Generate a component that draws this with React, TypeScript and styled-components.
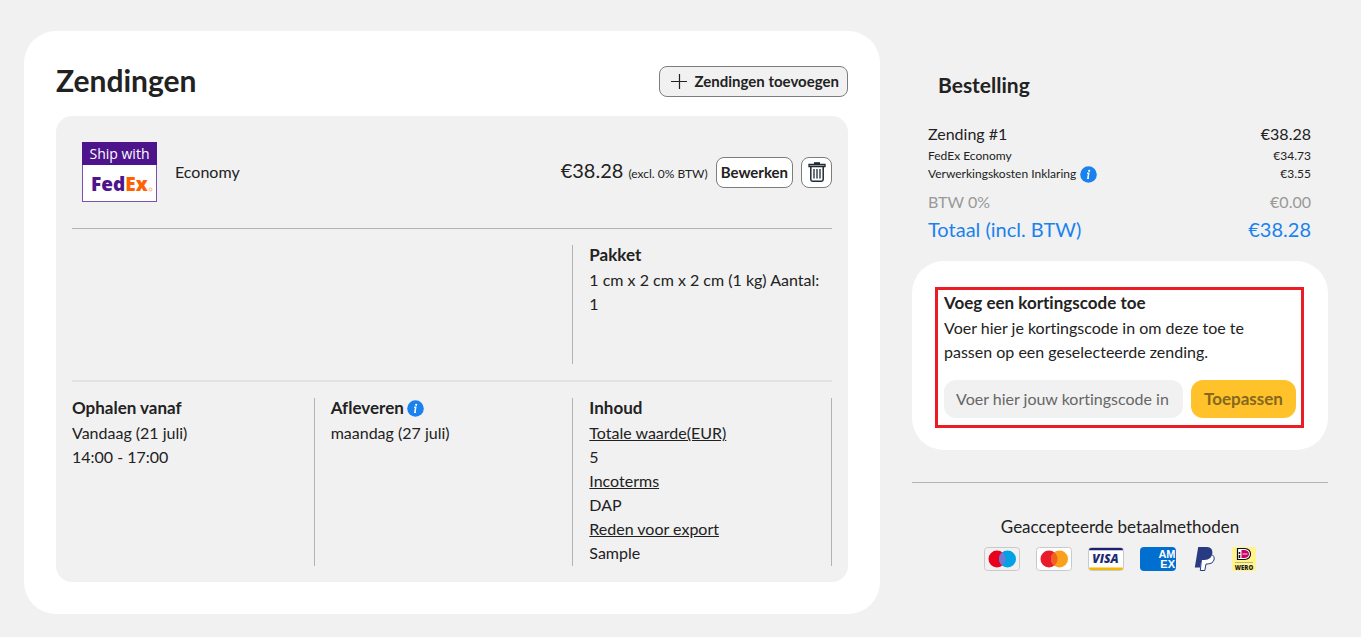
import React from "react";
import styled, { createGlobalStyle, css } from "styled-components";

const Global = createGlobalStyle`
  * { box-sizing: border-box; }
  body {
    margin: 0;
    background: #f1f1f1;
    color: #222;
    font-family: Lato, "Liberation Sans", sans-serif;
    font-size: 16px;
    line-height: 24px;
    font-variant-ligatures: none;
  }
  h1, h2, h3, p { margin: 0; }
  button, input { font: inherit; color: inherit; }
`;

const Page = styled.div`
  display: grid;
  grid-template-columns: minmax(0, 1fr) 416px;
  gap: 32px;
  align-items: start;
  padding: 31px 33px 23px 24px;
`;

const Card = styled.main`
  background: #fff;
  border-radius: 32px;
  padding: 32px;
`;

const CardHeader = styled.header`
  display: flex;
  align-items: center;
  justify-content: space-between;
  height: 36px;
  margin-bottom: 17px;
`;

const Title = styled.h1`
  font-size: 30px;
  line-height: 34px;
  padding-bottom: 2px;
  font-weight: 700;
`;

const OutlineButton = styled.button<{ $plain?: boolean; $square?: boolean }>`
  display: inline-flex;
  align-items: center;
  justify-content: center;
  gap: 8px;
  height: 31px;
  padding: ${(p) => (p.$square ? "0" : p.$plain ? "0 8px 0 11px" : "0 4px")};
  ${(p) => p.$square && css`width: 31px;`}
  border: 1px solid #7d7d7d;
  border-radius: 8px;
  background: ${(p) => (p.$plain ? "#f1f1f1" : "#fff")};
  font-size: 15px;
  font-weight: 700;
  white-space: nowrap;
`;

const Panel = styled.section`
  background: #f1f1f1;
  border-radius: 16px;
  padding: 0 16px;
`;

const ServiceRow = styled.div`
  display: flex;
  align-items: center;
  height: 113px;
  padding-left: 10px;
  border-bottom: 1px solid #b3b3b3;
`;

const ServiceName = styled.span`
  flex: 1;
  margin-left: 18px;
`;

const Price = styled.span`
  margin-right: 8px;
  font-size: 20px;
  small { font-size: 12px; }
`;

const Actions = styled.div`
  display: flex;
  gap: 8px;
`;

const DetailGrid = styled.div<{ $ruled?: boolean }>`
  display: grid;
  grid-template-columns: repeat(3, minmax(0, 1fr));
  gap: 16px;
  padding: 16px 0;
  min-height: ${(p) => (p.$ruled ? "153px" : "200px")};
  ${(p) => p.$ruled && css`border-bottom: 2px solid #e3e3e3;`}
`;

const Cell = styled.div<{ $line?: boolean; $span?: number }>`
  border-right: ${(p) => (p.$line ? "1px solid #b3b3b3" : "0")};
  ${(p) => p.$span && css`grid-column: span ${p.$span};`}
`;

const CellTitle = styled.h3`
  display: flex;
  align-items: center;
  gap: 3px;
  margin-bottom: 3px;
  font-size: 17px;
  line-height: 20px;
  font-weight: 700;
`;

const Term = styled.p`
  text-decoration: underline;
`;

const Aside = styled.aside`
  padding-top: 42px;
`;

const OrderTitle = styled.h2`
  padding-left: 26px;
  font-size: 21px;
  line-height: 24px;
  font-weight: 700;
  margin-bottom: 25px;
`;

const OrderLines = styled.div`
  padding: 0 17px 0 16px;
`;

const OrderLine = styled.div<{ $kind?: "small" | "muted" | "total" }>`
  display: flex;
  justify-content: space-between;
  font-size: 16px;
  line-height: 24px;
  &:first-child { margin-bottom: 1px; }
  ${(p) => p.$kind === "small" && css`font-size: 12px; line-height: 18px;`}
  ${(p) => p.$kind === "muted" && css`color: #999; margin-top: 7px;`}
  ${(p) => p.$kind === "total" && css`color: #1a82ee; font-size: 20px; line-height: 30px;`}
`;

const LineLabel = styled.span`
  display: flex;
  align-items: center;
  gap: 4px;
`;

const Discount = styled.section`
  margin-top: 17px;
  padding: 26px 24px 22px 23px;
  border-radius: 32px;
  background: #fff;
`;

const Highlight = styled.form`
  padding: 3px 5px 7px 6px;
  border: 3px solid #ec1c24;
`;

const DiscountTitle = styled.h3`
  margin-bottom: 3px;
  font-size: 17px;
  line-height: 20px;
  font-weight: 700;
`;

const CodeRow = styled.div`
  display: flex;
  gap: 8px;
  margin-top: 16px;
`;

const CodeInput = styled.input`
  flex: 1;
  min-width: 0;
  height: 38px;
  padding: 0 12px 2px;
  border: 0;
  border-radius: 12px;
  background: #f1f1f1;
  &::placeholder { color: #666; opacity: 1; }
`;

const ApplyButton = styled.button`
  width: 105px;
  height: 38px;
  padding: 0;
  border: 0;
  border-radius: 12px;
  background: #ffc22a;
  color: #84681f;
  font-size: 17px;
  font-weight: 700;
`;

const Payments = styled.section`
  margin-top: 32px;
  padding-top: 32px;
  border-top: 1px solid #b3b3b3;
  text-align: center;
  font-size: 17px;
`;

const PaymentIcons = styled.div`
  display: flex;
  justify-content: center;
  gap: 16px;
  margin-top: 8px;
  svg { display: block; }
`;

const Info = () => (
  <svg width="17" height="17" viewBox="0 0 17 17" role="img" aria-label="Info">
    <circle cx="8.5" cy="8.5" r="8.3" fill="#1a82ee" />
    <circle cx="9.2" cy="4.8" r="1.1" fill="#fff" />
    <path d="M7.2 7.2h1.5l-.8 5h1" fill="none" stroke="#fff" strokeWidth="1.5" />
  </svg>
);

const Plus = () => (
  <svg width="16" height="16" viewBox="0 0 16 16" aria-hidden="true">
    <path d="M0 8.5h16M8.5 1v15" stroke="#222" strokeWidth="1.2" />
  </svg>
);

const Trash = () => (
  <svg width="18" height="20" viewBox="0 0 18 20" fill="none" stroke="#1f2a33" aria-hidden="true">
    <path d="M6 1.2h6" strokeWidth="2" />
    <path d="M1 2.5h16v2H1z" strokeWidth="1.3" />
    <path d="M2.8 4.5v13q0 1.7 1.7 1.7h9q1.7 0 1.7-1.7v-13" strokeWidth="1.5" />
    <path d="M6 7v9.5M9 7v9.5M12 7v9.5" strokeWidth="1.3" />
  </svg>
);

const FedEx = () => (
  <svg width="75" height="60" viewBox="0 0 75 60" role="img" aria-label="Ship with FedEx">
    <rect x=".5" y=".5" width="74" height="59" fill="#fff" stroke="#7d4fae" />
    <rect width="75" height="23" fill="#4d148c" />
    <text x="37.5" y="17" textAnchor="middle" fontFamily="Open Sans" fontWeight="400" fontSize="14" fill="#fff">Ship with</text>
    <text x="9" y="49" fontFamily="Open Sans" fontWeight="800" fontSize="19" fill="#4d148c">Fed<tspan fill="#ff6200">Ex</tspan></text>
    <circle cx="68.5" cy="47.5" r="1.5" fill="none" stroke="#ff9a55" strokeWidth=".8" />
  </svg>
);

const DuoCard = ({ name, left, right, overlap, fill }: { name: string; left: string; right: string; overlap: string; fill: string }) => (
  <svg width="36" height="24" viewBox="0 0 36 24" role="img" aria-label={name}>
    <rect x=".5" y=".5" width="35" height="23" rx="3" fill={fill} stroke="#c9c9c9" />
    <circle cx="13" cy="12" r="8.5" fill={left} />
    <circle cx="23.5" cy="12" r="8.5" fill={right} />
    <path d="M18.25 5.3a8.5 8.5 0 0 1 0 13.4a8.5 8.5 0 0 1 0-13.4z" fill={overlap} />
  </svg>
);

const Visa = () => (
  <svg width="36" height="24" viewBox="0 0 36 24" role="img" aria-label="Visa">
    <rect x=".5" y=".5" width="35" height="23" rx="3" fill="#fff" stroke="#c9c9c9" />
    <path d="M1 3.2V3q0-2 2-2h30q2 0 2 2v.2z" fill="#1a1f71" />
    <path d="M1 20.5h34V21q0 2-2 2H3q-2 0-2-2z" fill="#f7b600" />
    <text x="17.5" y="16" textAnchor="middle" fontFamily="Open Sans" fontStyle="italic" fontWeight="800" fontSize="12" fill="#1f2a72">VISA</text>
  </svg>
);

const Amex = () => (
  <svg width="36" height="24" viewBox="0 0 36 24" role="img" aria-label="American Express">
    <rect width="36" height="24" rx="4" fill="#016fd0" />
    <g fontFamily="Liberation Sans" fontWeight="700" fontSize="11" fill="#fff" textAnchor="end">
      <text x="35.5" y="11">AM</text>
      <text x="35" y="21">EX</text>
    </g>
  </svg>
);

const PayPal = () => (
  <svg width="24" height="24" viewBox="0 0 24 24" role="img" aria-label="PayPal">
    <path d="M10 7h8.5q4.5 1.5 3.5 6-1.2 4-6 4h-2l-1.2 6.5H8.3z" fill="#fff" stroke="#283b82" strokeWidth="1" />
    <path d="M6.2 0h9q5.5.5 5.2 6-.8 7-8 7H9.5L8 20.5H2.8z" fill="#283b82" />
  </svg>
);

const Wero = () => (
  <svg width="24" height="24" viewBox="0 0 24 24" role="img" aria-label="iDEAL Wero">
    <rect width="24" height="24" fill="#fff48d" />
    <path d="M5.5 1.5h7q6 .5 6 5.5t-6 5.5h-7z" fill="#fff" stroke="#111" strokeWidth="1.2" />
    <path d="M9.5 3h3q4.5.5 4.5 4t-4.5 4h-3z" fill="#cc0066" />
    <circle cx="7.5" cy="6" r="1" fill="#111" />
    <path d="M6.7 8h1.6v3H6.7z" fill="#111" />
    <path d="M10.5 7h5" stroke="#f3b4d3" strokeWidth="1.2" />
    <path d="M3 15.5h18" stroke="#bdb56a" />
    <text x="12" y="22.5" textAnchor="middle" fontFamily="Open Sans" fontWeight="800" fontSize="6" fill="#1d1c1c">WERO</text>
  </svg>
);

export default function App() {
  return (
    <>
      <Global />
      <Page>
        <Card>
          <CardHeader>
            <Title>Zendingen</Title>
            <OutlineButton type="button" $plain><Plus />Zendingen toevoegen</OutlineButton>
          </CardHeader>
          <Panel>
            <ServiceRow>
              <FedEx />
              <ServiceName>Economy</ServiceName>
              <Price>€38.28 <small>(excl. 0% BTW)</small></Price>
              <Actions>
                <OutlineButton type="button">Bewerken</OutlineButton>
                <OutlineButton type="button" $square aria-label="Verwijderen"><Trash /></OutlineButton>
              </Actions>
            </ServiceRow>
            <DetailGrid $ruled>
              <Cell $line $span={2} />
              <Cell>
                <CellTitle>Pakket</CellTitle>
                <p>1 cm x 2 cm x 2 cm (1 kg) Aantal:<br />1</p>
              </Cell>
            </DetailGrid>
            <DetailGrid>
              <Cell $line>
                <CellTitle>Ophalen vanaf</CellTitle>
                <p>Vandaag (21 juli)</p>
                <p>14:00 - 17:00</p>
              </Cell>
              <Cell $line>
                <CellTitle>Afleveren <Info /></CellTitle>
                <p>maandag (27 juli)</p>
              </Cell>
              <Cell $line>
                <CellTitle>Inhoud</CellTitle>
                <Term>Totale waarde(EUR)</Term>
                <p>5</p>
                <Term>Incoterms</Term>
                <p>DAP</p>
                <Term>Reden voor export</Term>
                <p>Sample</p>
              </Cell>
            </DetailGrid>
          </Panel>
        </Card>
        <Aside>
          <OrderTitle>Bestelling</OrderTitle>
          <OrderLines>
            <OrderLine><span>Zending #1</span><span>€38.28</span></OrderLine>
            <OrderLine $kind="small"><span>FedEx Economy</span><span>€34.73</span></OrderLine>
            <OrderLine $kind="small"><LineLabel>Verwerkingskosten Inklaring <Info /></LineLabel><span>€3.55</span></OrderLine>
            <OrderLine $kind="muted"><span>BTW 0%</span><span>€0.00</span></OrderLine>
            <OrderLine $kind="total"><span>Totaal (incl. BTW)</span><span>€38.28</span></OrderLine>
          </OrderLines>
          <Discount>
            <Highlight>
              <DiscountTitle>Voeg een kortingscode toe</DiscountTitle>
              <p>Voer hier je kortingscode in om deze toe te passen op een geselecteerde zending.</p>
              <CodeRow>
                <CodeInput aria-label="Kortingscode" placeholder="Voer hier jouw kortingscode in" />
                <ApplyButton type="button">Toepassen</ApplyButton>
              </CodeRow>
            </Highlight>
          </Discount>
          <Payments>
            <p>Geaccepteerde betaalmethoden</p>
            <PaymentIcons>
              <DuoCard name="Maestro" left="#eb001b" right="#00a2e5" overlap="#7375cf" fill="#f1f1f1" />
              <DuoCard name="Mastercard" left="#e81c2a" right="#faa01c" overlap="#f26122" fill="#fff" />
              <Visa />
              <Amex />
              <PayPal />
              <Wero />
            </PaymentIcons>
          </Payments>
        </Aside>
      </Page>
    </>
  );
}
